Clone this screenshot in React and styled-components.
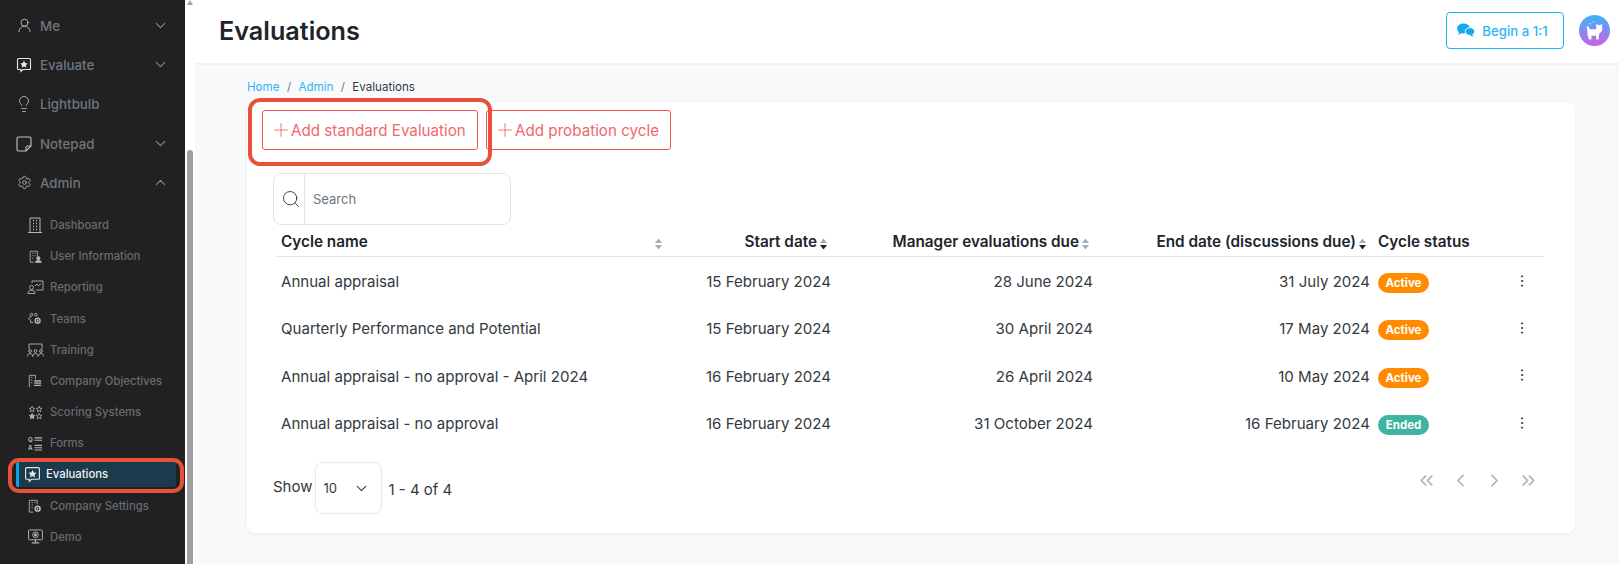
import React from 'react';
import styled, { createGlobalStyle } from 'styled-components';
import {
  UserRound, Lightbulb, Settings, ChevronDown, ChevronUp, Search, Plus,
  EllipsisVertical, ChevronsLeft, ChevronLeft, ChevronRight, ChevronsRight,
} from 'lucide-react';

const GlobalStyle = createGlobalStyle`
  html, body {
    margin: 0;
    height: 100%;
    overflow: hidden;
    background: #f8f9fb;
    font-family: Inter, "Liberation Sans", sans-serif;
  }
  * { box-sizing: border-box; }
`;

const Page = styled.div`
  display: flex;
  height: 564px;
  width: 1619px;
`;

const Sidebar = styled.nav`
  width: 185px;
  height: 564px;
  flex: none;
  background: #212121;
  padding-top: 6px;
  overflow: hidden;
`;

const NavItem = styled.div`
  height: 39.3px;
  display: flex;
  align-items: center;
  padding: 0 16px 0 15px;
  color: #6d7680;
  font-size: 13.3px;
  font-weight: 500;
  svg.chev { color: #878c91; margin-left: auto; }
`;

const NavIcon = styled.span`
  width: 18px;
  height: 18px;
  margin-right: 7px;
  display: flex;
  align-items: center;
  justify-content: center;
  flex: none;
  color: ${(p) => (p.$bright ? '#e6e6e6' : '#c4c4c4')};
`;

const SubNav = styled.div`
  padding-top: 7px;
`;

const SubItem = styled.div`
  height: 31.2px;
  display: flex;
  align-items: center;
  padding-left: 24px;
  color: #646c74;
  font-size: 11.3px;
  font-weight: 500;
`;

const IconSlot = styled.span`
  width: 22px;
  margin-right: 4px;
  display: flex;
  justify-content: center;
  color: #b5b5b5;
  flex: none;
`;

const ActiveItem = styled.div`
  position: relative;
  height: 25px;
  margin: 3px 9px 3.2px 16px;
  display: flex;
  align-items: center;
  padding-left: 5px;
  background: #1b3b4d;
  border-left: 3px solid #08a4ea;
  border-radius: 2px;
  color: #f2f4f5;
  font-size: 11.3px;
  font-weight: 500;
  svg { color: #e4e4e4; flex: none; margin-right: 5px; }
`;

const Ring = styled.span`
  position: absolute;
  top: ${(p) => p.$top}px;
  right: ${(p) => p.$right}px;
  bottom: ${(p) => p.$bottom}px;
  left: ${(p) => p.$left}px;
  border: 4px solid #e8503a;
  border-radius: ${(p) => p.$radius}px;
  pointer-events: none;
  z-index: 2;
`;

const Scrollbar = styled.div`
  width: 10px;
  flex: none;
  background: #fff;
  display: flex;
  flex-direction: column;
  align-items: center;
`;

const ScrollArrow = styled.div`
  width: 0;
  height: 0;
  border-left: 3.5px solid transparent;
  border-right: 3.5px solid transparent;
  border-bottom: 5px solid #a3a3a6;
`;

const ScrollThumb = styled.div`
  margin-top: 145px;
  width: 6px;
  flex: 1;
  background: #a0a0a4;
  border-radius: 3px 3px 0 0;
`;

const Main = styled.div`
  flex: 1;
  min-width: 0;
`;

const Header = styled.header`
  height: 65px;
  background: #fff;
  border-bottom: 2px solid #f0f1f4;
  display: flex;
  align-items: center;
  padding: 0 9px 2px 24px;
`;

const Title = styled.h1`
  margin: 0;
  font-size: 25.2px;
  font-weight: 600;
  color: #212529;
`;

const BeginButton = styled.button`
  margin-left: auto;
  width: 118px;
  height: 37px;
  padding: 0 5px 0 0;
  border: 1px solid #15b4f5;
  border-radius: 4px;
  background: #fff;
  color: #2db5f5;
  font: 500 13.2px Inter, sans-serif;
  display: flex;
  align-items: center;
  justify-content: center;
  gap: 7px;
`;

const Avatar = styled.div`
  width: 31px;
  height: 31px;
  margin-left: 15px;
  border-radius: 50%;
  background: linear-gradient(180deg, #38b6f6 0%, #8a86f0 55%, #cf5fe8 100%);
  display: flex;
  align-items: center;
  justify-content: center;
`;

const Content = styled.div`
  padding: 14px 44px 0 52px;
`;

const Breadcrumb = styled.div`
  height: 16px;
  display: flex;
  align-items: center;
  font-size: 11.6px;
  color: #343a40;
  a { color: #2db5f5; }
  span { color: #70767c; margin: 0 7.4px; }
`;

const Card = styled.section`
  margin-top: 7px;
  height: 431px;
  background: #fff;
  border-radius: 8px;
  box-shadow: 0 1px 4px rgba(30, 40, 60, 0.06);
  padding: 8px 31px 0 15px;
`;

const Actions = styled.div`
  display: flex;
  gap: 8px;
`;

const AddButtonWrap = styled.div`
  position: relative;
`;

const AddButton = styled.button`
  height: 40px;
  width: ${(p) => p.$width}px;
  padding: 0 0 0 7px;
  border: 1px solid #ef5350;
  border-radius: 3px;
  background: #fff;
  color: #f2686a;
  font: 400 15.2px Inter, sans-serif;
  display: flex;
  align-items: center;
  svg { margin-right: -1px; }
`;

const SearchBox = styled.div`
  margin: 23px 0 0 11px;
  width: 238px;
  height: 52px;
  display: flex;
  border: 1px solid #e0e3e8;
  border-radius: 8px;
`;

const SearchIcon = styled.div`
  width: 31px;
  padding-left: 4px;
  border-right: 1px solid #e0e3e8;
  display: flex;
  align-items: center;
  justify-content: center;
  color: #2f353b;
`;

const SearchText = styled.div`
  padding-left: 8px;
  align-self: center;
  font-size: 13px;
  color: #6c757d;
  margin-top: -1px;
`;

const Table = styled.table`
  margin-left: 15px;
  width: 1267px;
  table-layout: fixed;
  border-collapse: collapse;
`;

const Th = styled.th`
  height: 31px;
  padding: 7px 7px 0 4px;
  border-bottom: 1px solid #dde2ea;
  font-size: 15.3px;
  font-weight: 600;
  color: #212529;
  text-align: left;
  vertical-align: top;
  line-height: 20px;
  white-space: nowrap;
`;

const HeadInner = styled.div`
  display: flex;
  align-items: center;
  justify-content: ${(p) => p.$justify || 'flex-end'};
  gap: 2px;
  svg { margin-top: 4px; flex: none; }
`;

const Td = styled.td`
  height: 47.3px;
  padding: 4px 4px 0;
  font-size: 15.07px;
  color: #343a40;
  text-align: ${(p) => p.$align || 'left'};
`;

const Badge = styled.span`
  display: inline-flex;
  align-items: center;
  justify-content: center;
  width: 51px;
  height: 20px;
  border-radius: 10px;
  background: ${(p) => (p.$ended ? '#3eb5a0' : '#ff8c00')};
  color: #fff;
  font-size: 11.5px;
  font-weight: 700;
  margin-top: 3px;
`;

const MenuCell = styled(Td)`
  padding: 4px 0 0;
  text-align: center;
  color: #343a40;
  svg { display: block; margin: -2px auto 0; }
`;

const Footer = styled.div`
  margin: 17px 0 0 11px;
  display: flex;
  align-items: center;
  font-size: 15px;
  color: #343a40;
`;

const ShowText = styled.div`
  margin-top: -3px;
`;

const SelectBox = styled.div`
  margin-left: 2px;
  width: 67px;
  height: 52px;
  border: 1px solid #e8eaed;
  border-radius: 8px;
  display: flex;
  align-items: center;
  justify-content: space-between;
  padding: 0 11px 0 8px;
  font-size: 13px;
  color: #343a40;
`;

const RangeText = styled.div`
  margin: 3px 0 0 7px;
`;

const Pager = styled.div`
  margin-left: auto;
  padding-right: 5px;
  align-self: flex-start;
  margin-top: 8px;
  display: flex;
  gap: 13px;
  color: #b2b2b2;
`;

const Svg = ({ size = 16, children }) => (
  <svg width={size} height={size} viewBox="0 0 16 16" fill="none" stroke="currentColor" strokeWidth="1">
    {children}
  </svg>
);

const StarChat = ({ size }) => (
  <Svg size={size}>
    <path d="M2.5 1.5h11a1 1 0 0 1 1 1v9a1 1 0 0 1-1 1H7l-2 2v-2H2.5a1 1 0 0 1-1-1v-9a1 1 0 0 1 1-1z" strokeWidth="1.1" />
    <path d="M8 3.6l1.2 2.5 2.6.3-1.9 1.8.5 2.6L8 9.5l-2.4 1.3.5-2.6-1.9-1.8 2.6-.3z" fill="currentColor" stroke="none" />
  </Svg>
);

const StickyNote = () => (
  <Svg size={16}>
    <path d="M2.5 1h11A1.5 1.5 0 0 1 15 2.5V10l-5 5H2.5A1.5 1.5 0 0 1 1 13.5v-11A1.5 1.5 0 0 1 2.5 1z" strokeWidth="1.1" />
    <path d="M15 10h-3.5A1.5 1.5 0 0 0 10 11.5V15" strokeWidth="1.1" />
  </Svg>
);

const DashboardIcon = () => (
  <svg width="14" height="16" viewBox="0 0 14 16" fill="none" stroke="currentColor" strokeWidth="1">
    <path d="M2 15V1h10v14M0 15.500h14" />
    <path d="M5 3.500h1M8 3.500h1M5 6.500h1M8 6.500h1M5 9.500h1M8 9.500h1M5 12.500h1M8 12.500h1" strokeWidth="1.400" />
  </svg>
);

const UserInfoIcon = () => (
  <Svg size={13}>
    <path d="M1.5 15V1.5h9V8M1.5 15H6" />
    <path d="M4 4h1.5M7 4h1.5M4 7h1.5M7 7h1.5M4 10h1.5" />
    <circle cx="11.5" cy="10" r="2" fill="currentColor" />
    <path d="M8 15.5c0-2 1.5-3 3.5-3s3.5 1 3.5 3z" fill="currentColor" />
  </Svg>
);

const ReportingIcon = () => (
  <svg width="17" height="14" viewBox="0 0 17 14" fill="none" stroke="currentColor" strokeWidth="0.9">
    <path d="M5 3V1h11v9H9" />
    <path d="M8 6l2-2 1.500 2L14 3.500" />
    <circle cx="4.500" cy="7.500" r="2" />
    <path d="M1 13.500v-1c0-1.300 1.500-2 3.500-2s3.500.7 3.500 2v1z" />
  </svg>
);

const TeamsIcon = () => (
  <Svg size={14}>
    <circle cx="4" cy="3" r="1.500" />
    <circle cx="9" cy="3" r="1.500" />
    <path d="M1 9V7c0-1 1-1.500 3-1.500M6 12H3V8.500" />
    <circle cx="11" cy="10" r="2.800" strokeWidth="1.600" />
    <circle cx="11" cy="10" r="0.800" fill="currentColor" />
  </Svg>
);

const TrainingIcon = () => (
  <svg width="17" height="14" viewBox="0 0 17 14" fill="none" stroke="currentColor" strokeWidth="0.9">
    <path d="M2 6V1h13v5" />
    <circle cx="3" cy="8" r="1.400" />
    <circle cx="8.500" cy="8" r="1.400" />
    <circle cx="14" cy="8" r="1.400" />
    <path d="M.5 13.500c0-2 1-3 2.500-3s2.500 1 2.500 3M6 13.500c0-2 1-3 2.500-3s2.500 1 2.500 3M11.500 13.500c0-2 1-3 2.500-3s2.500 1 2.500 3" />
  </svg>
);

const ObjectivesIcon = () => (
  <Svg size={14}>
    <path d="M1.500 15V1.500h7V6" />
    <path d="M3.500 4h1.500M3.500 7h1.500M3.500 10h1.500" />
    <path d="M7 8h8M7 10.500h8M7 13h8" strokeWidth="1.500" />
  </Svg>
);

const star = (x, y, filled) => (
  <path
    key={`${x}-${y}`}
    transform={`translate(${x} ${y}) scale(0.42)`}
    d="M8 1l2.100 4.600 5 .6-3.700 3.400 1 5L8 11.900l-4.400 2.700 1-5L.9 6.200l5-.6z"
    fill={filled ? 'currentColor' : 'none'}
    strokeWidth="2"
  />
);

const ScoringIcon = () => (
  <Svg size={15}>
    {star(1, 1, false)}
    {star(8.500, 1, false)}
    {star(1, 8.500, true)}
    {star(8.500, 8.500, false)}
  </Svg>
);

const FormsIcon = () => (
  <Svg size={15}>
    <text x="0" y="6.500" fontSize="6.500" fill="currentColor" stroke="none" fontFamily="Inter" fontWeight="700">Q</text>
    <text x="0" y="14.500" fontSize="6.500" fill="currentColor" stroke="none" fontFamily="Inter" fontWeight="700">A</text>
    <path d="M7 2h8M7 4.500h8M7 10h8M7 12.500h8M7 15h8" strokeWidth="1.100" />
  </Svg>
);

const CompanySettingsIcon = () => (
  <Svg size={14}>
    <path d="M1.500 15V1.500h9V6M1.500 15H6" />
    <path d="M4 4h1.500M7 4h1.500M4 7h1.500M4 10h1.500" />
    <circle cx="11" cy="11" r="2.800" strokeWidth="1.800" />
    <circle cx="11" cy="11" r="0.700" fill="currentColor" />
  </Svg>
);

const DemoIcon = () => (
  <Svg size={15}>
    <rect x="0.600" y="1" width="14.800" height="10.500" rx="1" />
    <circle cx="8" cy="6.200" r="3" />
    <circle cx="8" cy="6.200" r="1.200" fill="currentColor" />
    <path d="M8 11.500v3M4 14.800h8" strokeWidth="1.200" />
  </Svg>
);

const ChatsIcon = () => (
  <svg width="18" height="15" viewBox="0 0 18 15" fill="#12a9ee">
    <ellipse cx="6.500" cy="5.500" rx="6.500" ry="5" />
    <path d="M2 8.500L1.500 12l4-2.500z" />
    <ellipse cx="13" cy="8.500" rx="4.800" ry="3.900" stroke="#fff" strokeWidth="1" />
    <path d="M15 11l1.500 3-4-2z" />
  </svg>
);

const CatIcon = () => (
  <svg width="24" height="24" viewBox="0 0 20 20" fill="#fff">
    <path d="M3 6c1 3 .5 6 1 8l1 3h2v-3h4v3h2l.5-5c1.500-1 2.500-2 2.500-3.500V4l-1.500 1h-2L11 4v4.500H6.500C5.500 8.500 5 7.500 4.500 6z" />
    <circle cx="6" cy="4" r="0.600" />
    <circle cx="8.500" cy="2.500" r="0.500" />
  </svg>
);

const SortIcon = ({ active }) => (
  <svg width="9" height="12" viewBox="0 0 9 12">
    <path d="M4.500 0.500L8 5H1z" fill="#a8abaf" />
    <path d="M1 7h7l-3.500 4.500z" fill={active ? '#212529' : '#a8abaf'} />
  </svg>
);

const subItems = [
  ['Dashboard', <DashboardIcon />],
  ['User Information', <UserInfoIcon />],
  ['Reporting', <ReportingIcon />],
  ['Teams', <TeamsIcon />],
  ['Training', <TrainingIcon />],
  ['Company Objectives', <ObjectivesIcon />],
  ['Scoring Systems', <ScoringIcon />],
  ['Forms', <FormsIcon />],
];

const cycles = [
  ['Annual appraisal', '15 February 2024', '28 June 2024', '31 July 2024', 'Active'],
  ['Quarterly Performance and Potential', '15 February 2024', '30 April 2024', '17 May 2024', 'Active'],
  ['Annual appraisal - no approval - April 2024', '16 February 2024', '26 April 2024', '10 May 2024', 'Active'],
  ['Annual appraisal - no approval', '16 February 2024', '31 October 2024', '16 February 2024', 'Ended'],
];

const columnWidths = [393, 165, 262, 277, 126, 44];

const SubRow = ({ icon, label }) => (
  <SubItem>
    <IconSlot>{icon}</IconSlot>
    {label}
  </SubItem>
);

export default function App() {
  return (
    <Page>
      <GlobalStyle />
      <Sidebar>
        <NavItem>
          <NavIcon><UserRound size={17} strokeWidth={1.2} /></NavIcon>Me
          <ChevronDown className="chev" size={17} strokeWidth={1.5} />
        </NavItem>
        <NavItem>
          <NavIcon $bright><StarChat size={16} /></NavIcon>Evaluate
          <ChevronDown className="chev" size={17} strokeWidth={1.5} />
        </NavItem>
        <NavItem>
          <NavIcon><Lightbulb size={18} strokeWidth={1.1} /></NavIcon>Lightbulb
        </NavItem>
        <NavItem>
          <NavIcon><StickyNote /></NavIcon>Notepad
          <ChevronDown className="chev" size={17} strokeWidth={1.5} />
        </NavItem>
        <NavItem>
          <NavIcon><Settings size={15} strokeWidth={1.2} /></NavIcon>Admin
          <ChevronUp className="chev" size={17} strokeWidth={1.5} />
        </NavItem>
        <SubNav>
          {subItems.map(([label, icon]) => (
            <SubRow key={label} label={label} icon={icon} />
          ))}
          <ActiveItem>
            <StarChat size={17} />
            Evaluations
            <Ring $top={-4} $right={-8} $bottom={-6} $left={-11} $radius={11} />
          </ActiveItem>
          <SubRow label="Company Settings" icon={<CompanySettingsIcon />} />
          <SubRow label="Demo" icon={<DemoIcon />} />
        </SubNav>
      </Sidebar>
      <Scrollbar>
        <ScrollArrow />
        <ScrollThumb />
      </Scrollbar>
      <Main>
        <Header>
          <Title>Evaluations</Title>
          <BeginButton><ChatsIcon />Begin a 1:1</BeginButton>
          <Avatar><CatIcon /></Avatar>
        </Header>
        <Content>
          <Breadcrumb>
            <a>Home</a><span>/</span><a>Admin</a><span>/</span>Evaluations
          </Breadcrumb>
          <Card>
            <Actions>
              <AddButtonWrap>
                <AddButton $width={216}><Plus size={22} strokeWidth={1} />Add standard Evaluation</AddButton>
                <Ring $top={-12} $right={-14} $bottom={-16} $left={-14} $radius={12} />
              </AddButtonWrap>
              <AddButton $width={185}><Plus size={22} strokeWidth={1} />Add probation cycle</AddButton>
            </Actions>
            <SearchBox>
              <SearchIcon><Search size={20} strokeWidth={1.1} /></SearchIcon>
              <SearchText>Search</SearchText>
            </SearchBox>
            <Table>
              <colgroup>
                {columnWidths.map((w, i) => <col key={i} width={w} />)}
              </colgroup>
              <thead>
                <tr>
                  <Th><HeadInner $justify="space-between">Cycle name<SortIcon /></HeadInner></Th>
                  <Th><HeadInner>Start date<SortIcon active /></HeadInner></Th>
                  <Th><HeadInner>Manager evaluations due<SortIcon /></HeadInner></Th>
                  <Th><HeadInner>End date (discussions due)<SortIcon active /></HeadInner></Th>
                  <Th>Cycle status</Th>
                  <Th />
                </tr>
              </thead>
              <tbody>
                {cycles.map((c) => (
                  <tr key={c[0]}>
                    <Td>{c[0]}</Td>
                    <Td $align="right">{c[1]}</Td>
                    <Td $align="right">{c[2]}</Td>
                    <Td $align="right">{c[3]}</Td>
                    <Td><Badge $ended={c[4] === 'Ended'}>{c[4]}</Badge></Td>
                    <MenuCell><EllipsisVertical size={16} strokeWidth={1.5} /></MenuCell>
                  </tr>
                ))}
              </tbody>
            </Table>
            <Footer>
              <ShowText>Show</ShowText>
              <SelectBox>10<ChevronDown size={17} strokeWidth={1.5} /></SelectBox>
              <RangeText>1 - 4 of 4</RangeText>
              <Pager>
                <ChevronsLeft size={21} strokeWidth={2} />
                <ChevronLeft size={21} strokeWidth={2} />
                <ChevronRight size={21} strokeWidth={2} />
                <ChevronsRight size={21} strokeWidth={2} />
              </Pager>
            </Footer>
          </Card>
        </Content>
      </Main>
    </Page>
  );
}
